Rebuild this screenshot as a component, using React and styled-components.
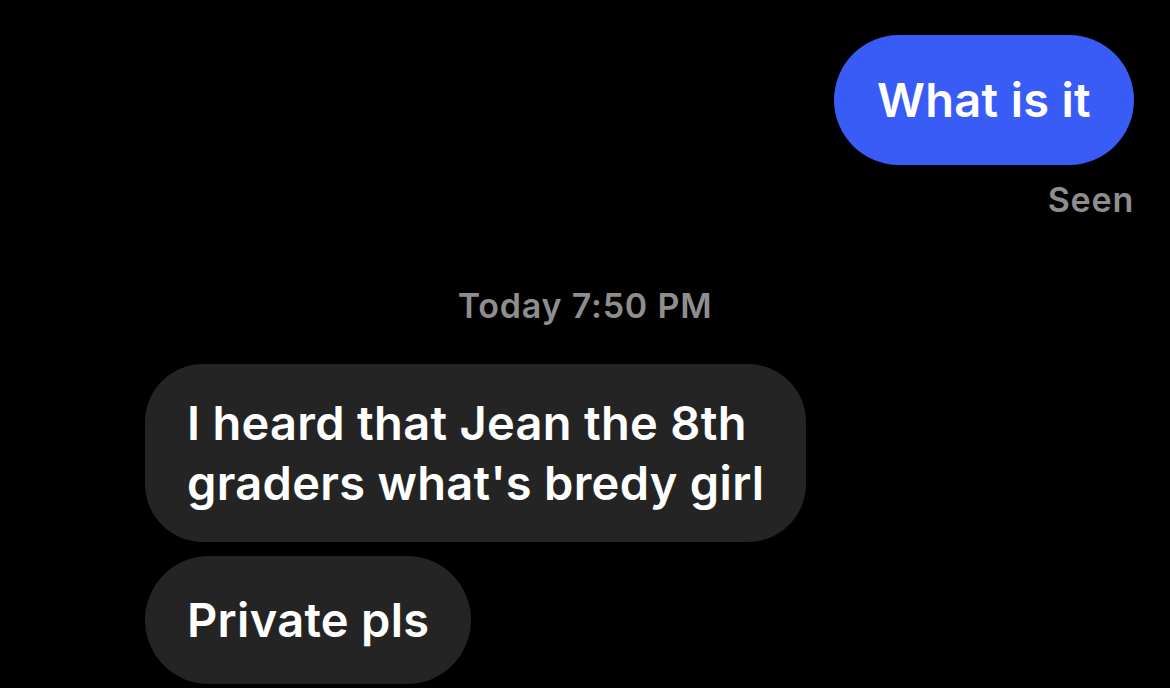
import React from "react";
import styled, { createGlobalStyle } from "styled-components";

const GlobalStyle = createGlobalStyle`
  html, body {
    margin: 0;
    padding: 0;
    background: #000;
  }
  body {
    font-family: Inter, "Liberation Sans", sans-serif;
    -webkit-font-smoothing: antialiased;
  }
`;

const messages = [
  { id: 1, text: "I heard that Jean the 8th\ngraders what's bredy girl", multi: true },
  { id: 2, text: "Private pls" },
];

function App() {
  return (
    <>
      <GlobalStyle />
      <Thread>
        <Outgoing>
          <Bubble $mine>What is it</Bubble>
          <Status>Seen</Status>
        </Outgoing>

        <Stamp>Today 7:50 PM</Stamp>

        <Incoming>
          {messages.map((m) => (
            <Bubble key={m.id} $multi={m.multi}>
              {m.text}
            </Bubble>
          ))}
        </Incoming>
      </Thread>
    </>
  );
}

const Thread = styled.div`
  width: 1170px;
  height: 688px;
  overflow: hidden;
  background: #000;
  display: flex;
  flex-direction: column;
  padding: 35px 36px 0 145px;
  box-sizing: border-box;
`;

const Outgoing = styled.div`
  display: flex;
  flex-direction: column;
  align-items: flex-end;
`;

const Incoming = styled.div`
  display: flex;
  flex-direction: column;
  align-items: flex-start;
  gap: 14px;
`;

const Bubble = styled.div`
  white-space: pre-line;
  font-size: 47px;
  font-weight: 600;
  line-height: 60px;
  color: #fff;
  letter-spacing: 0.3px;
  background: ${(p) => (p.$mine ? "#3a5cf6" : "#242424")};
  border-radius: ${(p) => (p.$multi ? "58px" : "65px")};
  padding: ${(p) =>
    p.$multi ? "29px 42px" : p.$mine ? "35px 43px" : "34px 42px"};
`;

const Status = styled.div`
  margin-top: 17px;
  font-size: 34px;
  font-weight: 600;
  color: #8e8e8e;
  line-height: 36px;
  letter-spacing: 0.8px;
`;

const Stamp = styled.div`
  align-self: center;
  margin: 68px 0 38px -109px;
  font-size: 34px;
  font-weight: 600;
  color: #8e8e8e;
  line-height: 40px;
  letter-spacing: 0.8px;
`;

export default App;
